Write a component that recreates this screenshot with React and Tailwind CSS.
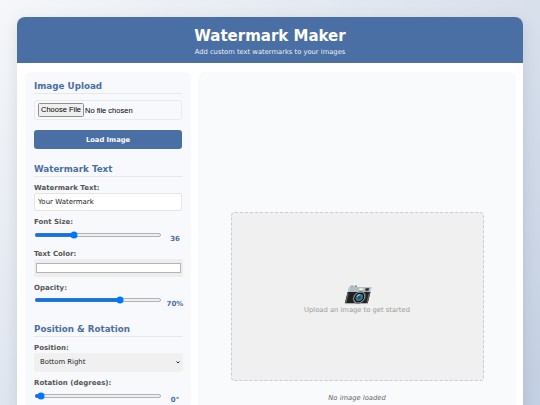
import React from "react";

const SectionTitle = ({ children }) => (
  <h2 className="text-[8.75px] leading-[13px] pt-[1px] font-bold text-[#4a6fa5] border-b border-[#e8e8e8]">{children}</h2>
);

const Label = ({ children }) => (
  <label className="block text-[7px] leading-[8px] pt-[2px] font-bold text-[#555]">{children}</label>
);

const Slider = ({ value, max, text, min = 0 }) => (
  <div className="flex items-start mt-[4.5px] h-[12px]">
    <input
      type="range"
      min={min}
      max={max}
      defaultValue={value}
      className="w-[255px] h-[16px] m-0 shrink-0 [zoom:0.5]"
    />
    <span className="w-[27px] shrink-0 text-center pt-[3px] text-[7px] leading-[10px] font-bold text-[#4a6fa5]">{text}</span>
  </div>
);

export default function App() {
  return (
    <div className="h-[405px] overflow-hidden bg-[linear-gradient(135deg,#f5f7fa,#c3cfe2)] p-[17px] font-['DejaVu_Sans',sans-serif]">
      <div className="rounded-[8px] overflow-hidden bg-white shadow-[0_4px_16px_rgba(0,0,0,0.1)]">
        <header className="h-[46px] bg-[#4a6fa5] text-center text-white pt-[8px]">
          <h1 className="text-[15px] leading-[22px] font-bold">Watermark Maker</h1>
          <p className="text-[6.75px] leading-[10px] opacity-90">Add custom text watermarks to your images</p>
        </header>
        <main className="flex gap-[7px] h-[480px] pt-[9px] pl-[8px] pr-[7px]">
          <section className="w-[166px] shrink-0 bg-[#f8f9fc] rounded-[6px] px-[9px] pt-[7px]">
            <SectionTitle>Image Upload</SectionTitle>
            <div className="mt-[6px] h-[20px] border border-[#eaeaea] rounded-[3px] flex items-center px-[3px]">
              <input
                type="file"
                className="w-[280px] [zoom:0.5] text-[15px] font-['Liberation_Sans',sans-serif] text-black file:bg-[#efefef] file:border file:border-[#8f8f8f] file:rounded-[3px] file:px-[4px] file:py-[1px] file:mr-[2px]"
              />
            </div>
            <button className="block w-full mt-[10px] h-[19px] pt-[1px] bg-[#4a6fa5] rounded-[3px] text-white text-[6.75px] font-bold">Load Image</button>

            <div className="mt-[13px]">
              <SectionTitle>Watermark Text</SectionTitle>
            </div>
            <div className="mt-[5px]">
              <Label>Watermark Text:</Label>
              <input
                type="text"
                defaultValue="Your Watermark"
                className="block w-full mt-[1px] h-[18px] px-[3px] bg-white border border-[#e5e5e5] rounded-[2px] text-[7px] text-[#222]"
              />
            </div>
            <div className="mt-[5px]">
              <Label>Font Size:</Label>
              <Slider value={36} min={10} max={96} text="36" />
            </div>
            <div className="mt-[5px]">
              <Label>Text Color:</Label>
              <input
                type="color"
                defaultValue="#ffffff"
                className="block w-[298px] h-[36px] mt-[2px] px-[2px] py-[4px] bg-[#eee] rounded-[4px] [zoom:0.5] [&::-webkit-color-swatch]:border-2 [&::-webkit-color-swatch]:border-[#b5b5b5]"
              />
            </div>
            <div className="mt-[5px]">
              <Label>Opacity:</Label>
              <Slider value={69} max={100} text="70%" />
            </div>

            <div className="mt-[14px]">
              <SectionTitle>Position &amp; Rotation</SectionTitle>
            </div>
            <div className="mt-[5px]">
              <Label>Position:</Label>
              <div className="relative mt-[1px]">
                <select
                  className="block w-[298px] h-[38px] px-[12px] appearance-none bg-[#f0f0f0] rounded-[6px] text-[13.75px] text-[#222] [zoom:0.5]"
                  defaultValue="br"
                >
                  <option value="br">Bottom Right</option>
                </select>
                <svg className="absolute right-[2px] top-[8px] w-[4px] h-[3px]" viewBox="0 0 8 6" fill="none" stroke="#222" strokeWidth="2">
                  <path d="M1 1l3 3 3-3" />
                </svg>
              </div>
            </div>
            <div className="mt-[5px]">
              <Label>Rotation (degrees):</Label>
              <Slider value={0} min={-5} max={175} text="0°" />
            </div>
          </section>

          <section className="flex-1 bg-[#f9fafc] rounded-[6px] flex flex-col items-center justify-center">
            <div className="w-[253px] h-[169px] pt-[3px] bg-[#f0f0f0] border border-dashed border-[#ccc] rounded-[4px] flex flex-col items-center justify-center">
              <div className="text-[21px] leading-[24px] italic text-[#999]">📷</div>
              <p className="text-[6.75px] leading-[10px] text-[#999]">Upload an image to get started</p>
            </div>
            <p className="mt-[12px] text-[6.75px] leading-[10px] italic text-[#666]">No image loaded</p>
          </section>
        </main>
      </div>
    </div>
  );
}
